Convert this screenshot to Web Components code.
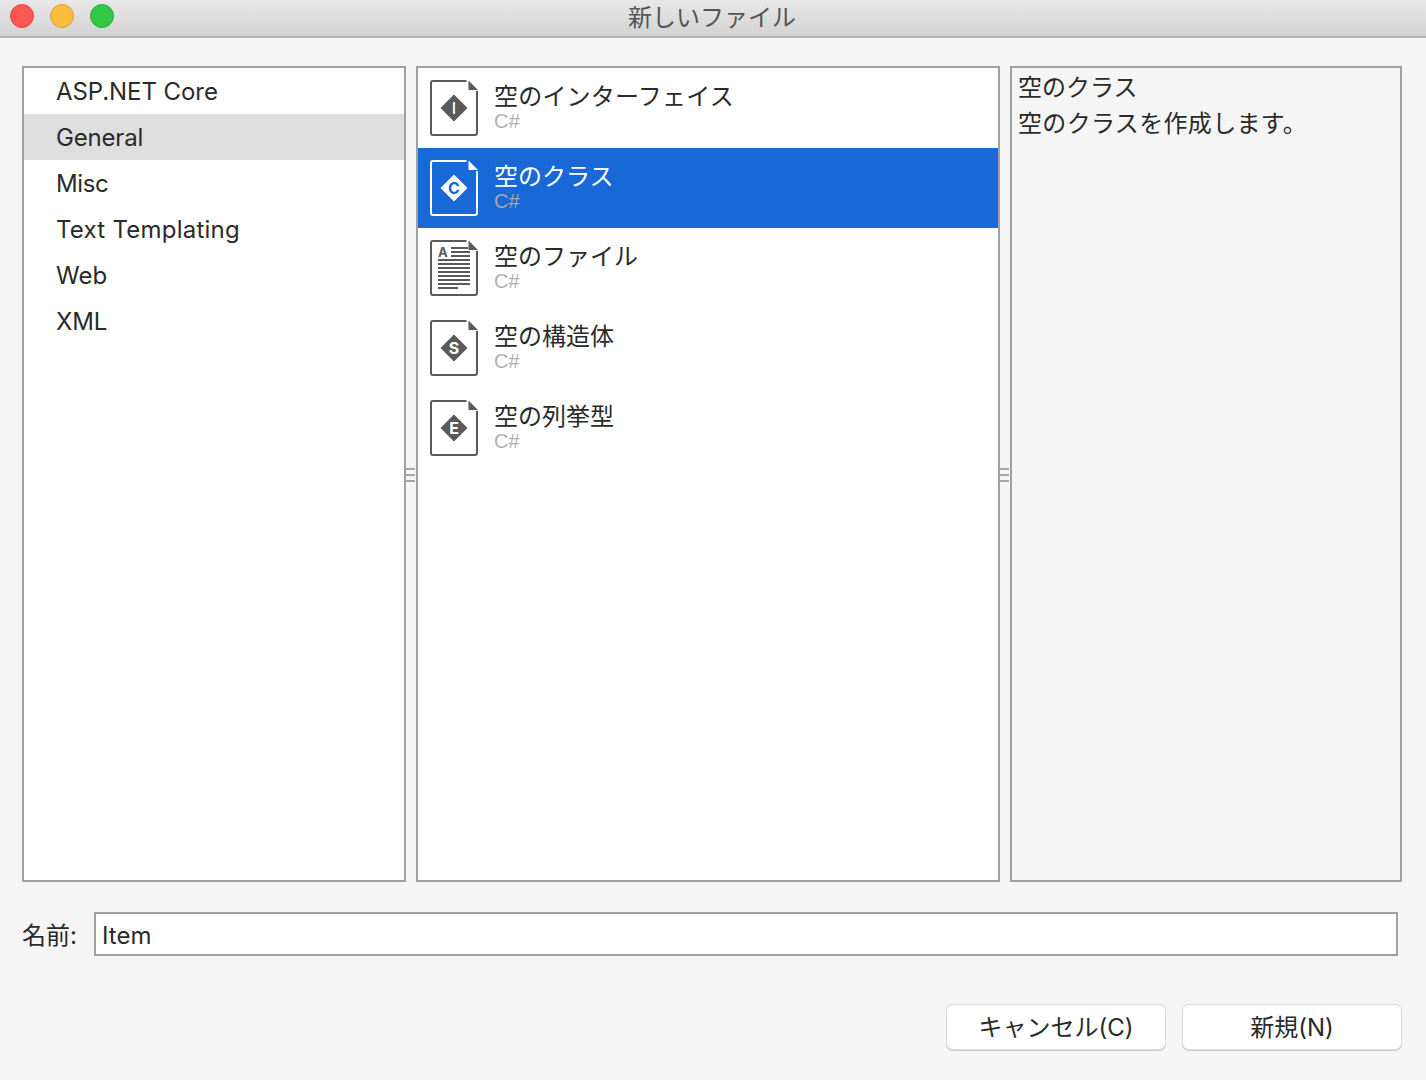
<!DOCTYPE html>
<html lang="ja"><head><meta charset="utf-8">
<style>
html,body{margin:0;padding:0;background:#f5f5f5}
body{width:1426px;height:1080px;overflow:hidden;font-family:Inter,"Noto Sans CJK JP",sans-serif;color:#2a2a2a}
</style></head><body>
<new-file-dialog></new-file-dialog>
<script>
function def(name,css,html){
  customElements.define(name,class extends HTMLElement{
    constructor(){super();this.attachShadow({mode:'open'}).innerHTML='<style>'+css+'</style>'+(typeof html==='function'?html(this):html);}
  });
}
const FONT='Inter,"Noto Sans CJK JP",sans-serif';
const TIGHT='"Liberation Sans","Noto Sans CJK JP",sans-serif';
def('title-bar',`
:host{display:flex;align-items:center;height:38px;box-sizing:border-box;position:relative;background:linear-gradient(#e8e8e8,#d2d2d2);border-bottom:2px solid #b4b4b4;padding:0 0 4px 10px;gap:16px}
i{display:block;width:24px;height:24px;box-sizing:border-box;border-radius:50%;border:1px solid}
.r{background:#fc5753;border-color:#df4744}.y{background:#fdbc40;border-color:#de9f34}.g{background:#33c748;border-color:#27aa35}
span{position:absolute;left:0;right:2px;top:0;text-align:center;font:24px/35px ${FONT};color:#555}
`,`<i class="r"></i><i class="y"></i><i class="g"></i><span><slot></slot></span>`);

def('cat-list',`
:host{display:block;width:384px;flex:none;box-sizing:border-box;background:#fff;border:2px solid #a0a0a0}
`,`<slot></slot>`);
def('cat-item',`
:host{display:block;height:46px;padding-left:32px;font:24px/48px ${FONT};color:#2a2a2a}
:host([selected]){background:#dedede}
`,`<slot></slot>`);

def('tpl-list',`
:host{display:block;width:584px;flex:none;box-sizing:border-box;background:#fff;border:2px solid #a0a0a0;margin-left:10px}
`,`<slot></slot>`);

const glyph=(k,fg,bg)=>{
  if(k==='A')return `<text x="8" y="17" font-family="Inter,sans-serif" font-weight="700" font-size="13" fill="${fg}">A</text>
  <path d="M21 8h17M21 12h19M21 16h19M8 20h32M8 24h32M8 28h32M8 32h32M8 36h32M8 40h32M8 44h32M8 48h20" stroke="${fg}" stroke-width="2" fill="none"/>`;
  return `<path d="M24 14.500 L37.500 28 L24 41.500 L10.500 28Z" fill="${fg}"/>
  <text x="24" y="33.800" text-anchor="middle" font-family="Inter,sans-serif" font-weight="${k==='I'?500:700}" font-size="16" fill="${bg}">${k}</text>`;
};
def('tpl-item',`
:host{display:flex;height:80px;box-sizing:border-box;padding:12px 0 0 12px;gap:16px;color:#2a2a2a}
:host([selected]){background:#1868d8;color:#fff}
svg{display:block;flex:none;width:48px;height:56px}
.t{display:block;font:24px/24px ${TIGHT};margin-top:5px}
.s{display:block;font:20px/20px ${TIGHT};color:#b0b0b0;margin-top:2px}
:host([selected]) .s{color:#a8a8a8}
`,h=>{
  const sel=h.hasAttribute('selected'),fg=sel?'#fff':'#5a5a5a',bg=sel?'#1868d8':'#fff';
  return `<svg viewBox="0 0 48 56"><path d="M36.500 1H3a2 2 0 0 0-2 2V53a2 2 0 0 0 2 2H45a2 2 0 0 0 2-2V11" fill="none" stroke="${fg}" stroke-width="2"/>
  <path d="M38.500 .5 L48 10 H38.500Z" fill="${fg}"/>${glyph(h.getAttribute('glyph'),fg,bg)}</svg>
  <div><span class="t"><slot></slot></span><span class="s">C#</span></div>`;
});

def('info-pane',`
:host{display:block;flex:none;width:392px;box-sizing:border-box;background:#f5f5f5;border:2px solid #a0a0a0;margin-left:10px;padding:2px 6px;font:24px/36px ${FONT};color:#2a2a2a}
`,`<slot></slot>`);

def('grip-dots',`
:host{position:absolute;top:468px;width:10px;height:16px;background:linear-gradient(#a8a8a8,#a8a8a8) 0 0/100% 2px no-repeat,linear-gradient(#a8a8a8,#a8a8a8) 0 6px/100% 2px no-repeat,linear-gradient(#a8a8a8,#a8a8a8) 0 12px/100% 2px no-repeat}
`,``);

def('name-row',`
:host{display:flex;align-items:center;height:44px;margin-top:30px;padding-right:4px;font:24px/32px ${FONT};color:#2a2a2a}
label{width:72px;flex:none;padding-top:4px}
.f{flex:1;height:44px;box-sizing:border-box;background:#fff;border:2px solid #a0a0a0;padding:0 6px;line-height:44px}
`,`<label>名前:</label><div class="f"><slot></slot></div>`);

def('push-btn',`
:host{display:block;width:218px;height:44px;box-sizing:border-box;background:#fff;border-radius:6px;box-shadow:0 0 0 1px #dcdcdc,0 1px 0 1px #c8c8c8;text-align:center;font:24px/46px ${FONT};color:#2a2a2a}
`,`<slot></slot>`);

def('new-file-dialog',`
:host{display:block;width:1426px;height:1080px;position:relative}
.c{padding:28px 24px 0 22px;display:block}
.p{display:flex;height:816px;align-items:stretch}
.bt{display:flex;justify-content:flex-end;gap:18px;margin-top:49px;padding-right:1px}
`,`<title-bar>新しいファイル</title-bar>
<div class="c"><div class="p">
<cat-list><cat-item style="letter-spacing:-.07px">ASP.NET Core</cat-item><cat-item selected style="letter-spacing:-.18px">General</cat-item><cat-item style="letter-spacing:-.4px">Misc</cat-item><cat-item style="letter-spacing:.23px">Text Templating</cat-item><cat-item>Web</cat-item><cat-item style="letter-spacing:-.2px">XML</cat-item></cat-list>
<tpl-list><tpl-item glyph="I" style="letter-spacing:.2px">空のインターフェイス</tpl-item><tpl-item glyph="C" selected>空のクラス</tpl-item><tpl-item glyph="A">空のファイル</tpl-item><tpl-item glyph="S">空の構造体</tpl-item><tpl-item glyph="E">空の列挙型</tpl-item></tpl-list>
<info-pane><div>空のクラス</div><div style="letter-spacing:.33px">空のクラスを作成します。</div></info-pane>
</div>
<grip-dots style="left:405px"></grip-dots><grip-dots style="left:999px"></grip-dots>
<name-row>Item</name-row>
<div class="bt"><push-btn>キャンセル(C)</push-btn><push-btn>新規(N)</push-btn></div>
</div>`);
</script>
</body></html>
